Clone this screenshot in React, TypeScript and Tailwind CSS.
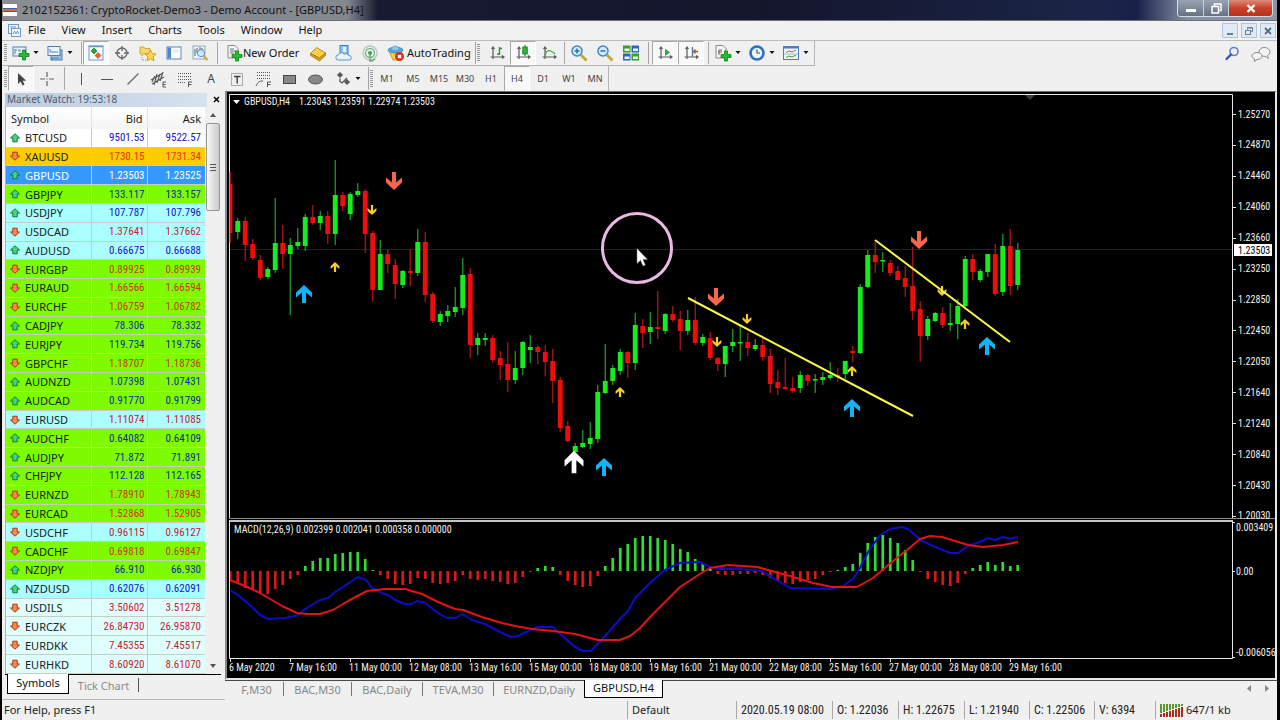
import type { ReactNode } from "react";

const UI = "font-['Noto_Sans','Open_Sans',sans-serif]";
const NUM = "font-['Roboto_Condensed','Roboto','Noto_Sans',sans-serif]";

/* ---------- market watch data ---------- */

const TONES = {
  white: "bg-white",
  gold: "bg-[#ffcc00]",
  selected: "bg-[#3399ff]",
  green: "bg-[#7ffb00]",
  cyan: "bg-[#abffff]",
  pale: "bg-[#dfffff]",
};
type Tone = keyof typeof TONES;
type Quote = [symbol: string, bid: string, ask: string, up: boolean, tone: Tone];

const QUOTES: Quote[] = [
  ["BTCUSD", "9501.53", "9522.57", true, "white"],
  ["XAUUSD", "1730.15", "1731.34", false, "gold"],
  ["GBPUSD", "1.23503", "1.23525", true, "selected"],
  ["GBPJPY", "133.117", "133.157", true, "green"],
  ["USDJPY", "107.787", "107.796", true, "cyan"],
  ["USDCAD", "1.37641", "1.37662", false, "cyan"],
  ["AUDUSD", "0.66675", "0.66688", true, "cyan"],
  ["EURGBP", "0.89925", "0.89939", false, "green"],
  ["EURAUD", "1.66566", "1.66594", false, "green"],
  ["EURCHF", "1.06759", "1.06782", false, "green"],
  ["CADJPY", "78.306", "78.332", true, "green"],
  ["EURJPY", "119.734", "119.756", true, "green"],
  ["GBPCHF", "1.18707", "1.18736", false, "green"],
  ["AUDNZD", "1.07398", "1.07431", true, "green"],
  ["AUDCAD", "0.91770", "0.91799", true, "green"],
  ["EURUSD", "1.11074", "1.11085", false, "cyan"],
  ["AUDCHF", "0.64082", "0.64109", true, "green"],
  ["AUDJPY", "71.872", "71.891", true, "green"],
  ["CHFJPY", "112.128", "112.165", true, "green"],
  ["EURNZD", "1.78910", "1.78943", false, "green"],
  ["EURCAD", "1.52868", "1.52905", false, "green"],
  ["USDCHF", "0.96115", "0.96127", false, "cyan"],
  ["CADCHF", "0.69818", "0.69847", false, "green"],
  ["NZDJPY", "66.910", "66.930", true, "green"],
  ["NZDUSD", "0.62076", "0.62091", true, "cyan"],
  ["USDILS", "3.50602", "3.51278", false, "pale"],
  ["EURCZK", "26.84730", "26.95870", false, "pale"],
  ["EURDKK", "7.45355", "7.45517", false, "pale"],
  ["EURHKD", "8.60920", "8.61070", false, "pale"],
];

/* ---------- chart data ---------- */

// high, body top, body bottom, low (chart units), direction
type Candle = [number, number, number, number, "u" | "d"];
const CANDLES: Candle[] = [
  [172, 184, 233, 243, "d"], [218, 221, 232, 239, "u"], [217, 221, 245, 261, "d"], [239, 244, 258, 260, "d"],
  [255, 260, 278, 280, "d"], [267, 269, 277, 279, "u"], [198, 243, 270, 273, "u"], [225, 243, 254, 269, "d"],
  [238, 245, 254, 315, "u"], [228, 242, 246, 249, "u"], [214, 217, 246, 251, "u"], [205, 217, 223, 225, "d"],
  [211, 216, 223, 230, "u"], [211, 216, 234, 244, "d"], [160, 195, 234, 245, "u"], [192, 195, 206, 211, "d"],
  [192, 194, 214, 220, "u"], [183, 191, 195, 197, "u"], [189, 191, 234, 253, "d"], [231, 233, 290, 302, "d"],
  [240, 254, 290, 290, "u"], [249, 254, 264, 273, "d"], [259, 265, 284, 299, "d"], [270, 271, 285, 288, "u"],
  [249, 271, 273, 286, "d"], [229, 242, 273, 276, "u"], [232, 242, 295, 302, "d"], [292, 294, 321, 323, "d"],
  [311, 314, 322, 326, "u"], [305, 311, 316, 322, "u"], [287, 307, 312, 317, "u"], [258, 275, 308, 315, "u"],
  [268, 274, 345, 358, "d"], [333, 338, 345, 355, "u"], [333, 338, 340, 346, "u"], [335, 338, 360, 363, "d"],
  [351, 358, 365, 380, "d"], [342, 364, 380, 392, "d"], [351, 368, 380, 384, "u"], [341, 342, 368, 375, "u"],
  [335, 347, 350, 363, "u"], [345, 347, 352, 364, "d"], [345, 352, 362, 376, "d"], [349, 361, 381, 403, "d"],
  [377, 380, 428, 432, "d"], [421, 426, 441, 442, "d"], [443, 446, 452, 452, "u"], [430, 443, 447, 448, "u"],
  [422, 438, 444, 449, "u"], [385, 392, 439, 443, "u"], [344, 381, 393, 394, "u"], [365, 368, 381, 385, "u"],
  [349, 352, 371, 375, "u"], [351, 352, 363, 378, "d"], [313, 325, 363, 370, "u"], [319, 326, 333, 348, "d"],
  [312, 327, 332, 344, "u"], [291, 327, 329, 339, "d"], [313, 314, 331, 334, "u"], [306, 314, 320, 322, "d"],
  [311, 319, 331, 350, "d"], [310, 320, 331, 335, "u"], [297, 320, 343, 345, "d"], [334, 337, 343, 346, "u"],
  [332, 338, 358, 360, "d"], [357, 358, 364, 371, "d"], [346, 346, 364, 377, "u"], [329, 342, 346, 352, "u"],
  [325, 342, 343, 361, "u"], [333, 342, 348, 356, "d"], [339, 345, 349, 351, "u"], [337, 345, 357, 361, "d"],
  [349, 356, 384, 393, "d"], [370, 382, 388, 395, "d"], [358, 387, 389, 390, "d"], [377, 388, 391, 393, "d"],
  [371, 375, 388, 393, "u"], [374, 375, 381, 386, "d"], [374, 379, 380, 393, "u"], [372, 377, 380, 385, "u"],
  [362, 375, 378, 380, "u"], [368, 375, 377, 382, "d"], [361, 361, 374, 379, "u"], [346, 351, 353, 362, "d"],
  [284, 287, 353, 354, "u"], [250, 255, 287, 288, "u"], [242, 255, 262, 273, "d"], [252, 260, 261, 272, "u"],
  [260, 263, 273, 276, "d"], [266, 271, 280, 280, "d"], [266, 278, 287, 297, "d"], [247, 286, 311, 320, "d"],
  [301, 309, 336, 362, "d"], [316, 319, 336, 340, "u"], [312, 313, 321, 322, "u"], [307, 313, 325, 328, "d"],
  [303, 323, 325, 331, "u"], [299, 306, 324, 339, "u"], [256, 259, 306, 307, "u"], [254, 259, 272, 280, "d"],
  [269, 271, 280, 282, "u"], [254, 254, 272, 277, "u"], [244, 254, 294, 296, "d"], [234, 246, 292, 296, "u"],
  [229, 246, 286, 295, "d"], [243, 250, 285, 290, "u"],
];

const HISTOGRAM = [
  -11, -13, -17, -18, -22, -23, -18, -14, -8, -4, 5, 10, 13, 13, 17, 18, 19, 19, 12, 1, -4, -8, -13, -14, -13, -7, -8,
  -12, -13, -12, -10, -4, -8, -9, -8, -10, -11, -13, -12, -6, -1, 3, 5, 4, -4, -10, -14, -16, -15, -5, 5, 13, 23, 27,
  33, 35, 35, 33, 31, 27, 22, 19, 12, 8, 2, -3, -4, -4, -3, -3, -2, -4, -7, -10, -12, -13, -11, -9, -8, -4, -1, 1, 4,
  7, 18, 28, 34, 36, 33, 28, 21, 11, -1, -8, -11, -14, -15, -12, -3, 3, 6, 9, 6, 9, 5, 6,
];

const MACD_LINE =
  "230,590 238,595 252,607 260,615 268,619 285,618 299,615 305,609 320,600 328,598 335,592 349,583 358,577 366,580 372,588 382,593 388,595 395,600 405,604 412,604 417,601 425,603 438,613 447,618 456,618 462,614 472,620 485,624 500,632 511,637 518,636 537,627 553,627 560,634 575,647 583,651 591,651 605,636 622,617 628,611 635,598 640,593 652,581 665,570 680,563 700,562 710,567 720,569 740,569 762,571 773,578 790,588 830,589 843,586 853,579 860,568 868,552 880,535 890,529 902,527 908,529 922,541 933,546 950,553 958,553 968,546 980,542 988,538 995,540 1003,537 1010,539 1018,537";
const SIGNAL_LINE =
  "230,580 245,586 260,593 282,606 297,613 308,614 320,614 333,610 348,601 367,591 385,589 405,589 422,594 438,602 455,609 463,610 482,617 502,623 515,626 532,629 553,631 575,634 598,640 620,640 630,636 640,628 653,614 680,587 703,572 710,568 728,565 757,567 790,576 813,583 832,587 857,587 873,578 893,561 907,550 920,539 930,536 942,537 968,545 983,547 1003,545 1018,542";

const PRICES = [
  "1.25270", "1.24870", "1.24460", "1.24060", "1.23660", "1.23250", "1.22850",
  "1.22450", "1.22050", "1.21640", "1.21240", "1.20840", "1.20430", "1.20030",
];
const DATES = [
  "6 May 2020", "7 May 16:00", "11 May 00:00", "12 May 08:00", "13 May 16:00", "15 May 00:00", "18 May 08:00",
  "19 May 16:00", "21 May 00:00", "22 May 08:00", "25 May 16:00", "27 May 00:00", "28 May 08:00", "29 May 16:00",
];

type Mark = [x: number, y: number, kind: "buy" | "sell" | "minorUp" | "minorDown" | "main"];
const MARKS: Mark[] = [
  [304, 294, "buy"], [604, 467, "buy"], [852, 408, "buy"], [987, 346, "buy"],
  [394, 181, "sell"], [716, 297, "sell"], [919, 240, "sell"],
  [335, 267, "minorUp"], [620, 392, "minorUp"], [852, 371, "minorUp"], [965, 324, "minorUp"],
  [372, 210, "minorDown"], [717, 342, "minorDown"], [747, 319, "minorDown"], [942, 291, "minorDown"],
  [574, 462, "main"],
];
const MARK_STYLE = {
  buy: { fill: "#12b4f8", sx: 1, sy: 1 },
  sell: { fill: "#f9664c", sx: 1, sy: -1 },
  minorUp: { fill: "#f5cf28", sx: 0.55, sy: 0.55 },
  minorDown: { fill: "#f5cf28", sx: 0.55, sy: -0.55 },
  main: { fill: "#ffffff", sx: 1.18, sy: 1.25 },
};

function Chart() {
  const cx = (i: number) => 230.2 + 7.5 * i;
  return (
    <svg
      viewBox="227 92 1048 586"
      preserveAspectRatio="xMinYMin meet"
      className={`block h-full w-full bg-black text-[10px] ${NUM}`}
      role="img"
      aria-label="GBPUSD H4 candlestick chart with MACD"
    >
      <path d="M229.5 518V94.5H1232.5V518.5" fill="none" stroke="#e8e8e8" />
      <path d="M229 518.5H1275" stroke="#8c8c8c" />
      <path d="M229 521H1233" stroke="#c4c4c4" strokeWidth="2" />
      <path d="M229.5 521V658.5H1232.5V521" fill="none" stroke="#e8e8e8" />
      <path d="M230 249.5H1232" stroke="#222524" />
      <path d="M1025 95h10l-5 5z" fill="#3c3c3c" />

      {CANDLES.map(([h, t, b, l, dir], i) => (
        <g key={i}>
          <rect x={cx(i) - 0.6} y={h} width="1.3" height={l - h} fill={dir === "u" ? "#1c9a24" : "#a81414"} />
          <rect
            x={i ? cx(i) - 2.4 : 230}
            y={t}
            width={i ? 4.9 : 2.4}
            height={Math.max(b - t, 1.5)}
            fill={dir === "u" ? "#14ee1c" : "#ee0c0c"}
          />
        </g>
      ))}

      {HISTOGRAM.map((v, i) => (
        <rect
          key={i}
          x={i ? cx(i) - 1.3 : 230}
          y={v > 0 ? 571 - v : 571}
          width={i ? 2.7 : 1.6}
          height={Math.abs(v)}
          fill={v > 0 ? "#2fdc35" : "#d81818"}
        />
      ))}
      <polyline points={MACD_LINE} fill="none" stroke="#0c0cc8" strokeWidth="2" strokeLinejoin="round" />
      <polyline points={SIGNAL_LINE} fill="none" stroke="#e01414" strokeWidth="2" strokeLinejoin="round" />

      {MARKS.map(([x, y, kind], i) => {
        const m = MARK_STYLE[kind];
        return (
          <path
            key={i}
            transform={`translate(${x} ${y}) scale(${m.sx} ${m.sy})`}
            d="M0-9L8-1.500V3.500L2-1.500V9H-2V-1.500L-8 3.500V-1.500Z"
            fill={m.fill}
          />
        );
      })}
      <path d="M688 298L913 416M875 240L1010 342" stroke="#fbf64a" strokeWidth="2" fill="none" />

      <circle cx="637" cy="248" r="34.500" fill="none" stroke="#ebb8e6" strokeWidth="3" />
      <path d="M637 248.500v15l3.500-3.200 2.500 5.700 2.400-1-2.500-5.600h4.600z" fill="#fff" stroke="#777" strokeWidth="0.500" />

      <path d="M233 100h7l-3.500 4z" fill="#fff" />
      <g fill="#f0f0f0">
        <text x="244" y="105">GBPUSD,H4</text>
        <text x="299" y="105">1.23043 1.23591 1.22974 1.23503</text>
        <text x="234" y="533">MACD(12,26,9) 0.002399 0.002041 0.000358 0.000000</text>
        {PRICES.map((p, i) => (
          <text key={p} x="1238" y={Math.round(117.5 + 30.92 * i)}>{p}</text>
        ))}
        <text x="1236" y="531">0.003409</text>
        <text x="1236" y="575">0.00</text>
        <text x="1236" y="656">-0.006056</text>
        {DATES.map((d, i) => (
          <text key={d} x={229 + 60 * i} y="671">{d}</text>
        ))}
      </g>
      {PRICES.map((p, i) => (
        <path key={p} d={`M1233 ${Math.round(114 + 30.92 * i) + 0.5}h3`} stroke="#ddd" />
      ))}
      {DATES.map((d, i) => (
        <path key={d} d={`M${230.5 + 60 * i} 659v3`} stroke="#ddd" />
      ))}
      <path d="M1233 571.500h2M1233 657.500h2M1233 522.500h2" stroke="#ddd" />
      <rect x="1234" y="244" width="38" height="12" fill="#fff" />
      <text x="1238" y="254" fill="#000">1.23503</text>
    </svg>
  );
}

/* ---------- icons ---------- */

function Icon({ children }: { children: ReactNode }) {
  return (
    <svg width="18" height="18" viewBox="0 0 18 18" fill="none" className="shrink-0" aria-hidden="true">
      {children}
    </svg>
  );
}
const Plus = ({ x, y }: { x: number; y: number }) => (
  <path transform={`translate(${x} ${y})`} d="M-1.500-5h3v3.500h3.500v3h-3.500v3.500h-3v-3.500h-3.500v-3h3.500z" fill="#22c02c" stroke="#0d7d18" strokeWidth="0.800" />
);
const Caret = () => (
  <svg width="6" height="4" viewBox="0 0 6 4" className="shrink-0" aria-hidden="true">
    <path d="M0.500 0h5L3 3z" fill="#111" />
  </svg>
);
const axes = <path d="M5 3v12M2.500 13H16M3.500 5L5 3l1.500 2M14 11.500L16 13l-2 1.500" stroke="#5a5a5a" strokeWidth="1.200" />;

const ICONS = {
  newChart: <Icon><rect x="1" y="3" width="13" height="9" fill="#e8f2fb" stroke="#4a80b4" /><path d="M3 5v5M3 6h2M7 5v2h2" stroke="#4a80b4" /><Plus x={12} y={11} /></Icon>,
  profiles: <Icon><rect x="5" y="6" width="11" height="10" fill="#9cc0e4" stroke="#4a7cae" /><rect x="2" y="2.500" width="12" height="9" fill="#eef6fd" stroke="#4a80b4" /><path d="M4 8h8M4 5v3M6 16v-2h7" stroke="#4a80b4" /></Icon>,
  marketWatch: <Icon><rect x="2" y="2" width="14" height="14" fill="#fff" stroke="#5a9bd8" /><path d="M2 2.500h14" stroke="#5a9bd8" strokeWidth="1.500" /><path d="M7 4l3 3-3 3-3-3z" fill="#28a428" stroke="#1a7c1a" strokeWidth="0.600" /><path d="M11 8.500l3 3-3 3-3-3z" fill="#f0603a" stroke="#b83a18" strokeWidth="0.600" /></Icon>,
  dataWindow: <Icon><circle cx="9" cy="9" r="5" stroke="#666" strokeWidth="1.300" /><path d="M9 2v5M9 11v5M2 9h5M11 9h5" stroke="#666" strokeWidth="1.300" /></Icon>,
  navigator: <Icon><path d="M1 3h4l1 1.500h5V10H1z" fill="#f9d867" stroke="#c29a2a" strokeWidth="0.800" /><path d="M3 11v5h4" stroke="#888" strokeDasharray="1 1" /><path d="M11.500 6l1.700 3.600 3.900.5-2.900 2.700.8 3.900-3.500-1.900L8 16.700l.8-3.900L5.900 10.100l3.900-.5z" fill="#ffd83c" stroke="#bb9116" strokeWidth="0.800" /></Icon>,
  terminal: <Icon><rect x="2" y="3" width="14" height="12" fill="#fff" stroke="#4f86bd" /><rect x="2.500" y="3.500" width="3.500" height="11" fill="#4a88c8" /><path d="M8 6h6M8 8h6" stroke="#cfdcea" /></Icon>,
  tester: <Icon><rect x="2" y="2" width="12" height="13" fill="#eaf2fa" stroke="#8ea8c4" /><path d="M4 5v7M6 4v5M9 3v5M11 4v5" stroke="#567" /><circle cx="10" cy="9" r="3.600" fill="#d2e8fa" fillOpacity="0.800" stroke="#5b8fc2" /><path d="M12.500 12l4 4" stroke="#d9a520" strokeWidth="2" /></Icon>,
  order: <Icon><path d="M3 1.500h7l3 3V14H3z" fill="#f4f4f4" stroke="#888" /><path d="M5 5h4M5 7h6M5 9h4" stroke="#777" /><Plus x={12} y={12} /></Icon>,
  metaEditor: <Icon><path d="M1.500 9.500L7.500 3.500 16.500 9l-6 5z" fill="#fbd04a" stroke="#a87a12" strokeWidth="0.800" /><path d="M1.500 9.500v2L10.500 17l6-5.500V9l-6 5z" fill="#d99b1c" stroke="#a87a12" strokeWidth="0.800" /></Icon>,
  cloud: <Icon><rect x="5" y="1.500" width="8" height="9" fill="#8cc4f4" stroke="#3f7fc0" /><rect x="8" y="3" width="3" height="5" fill="#e6f4fe" /><path d="M3.500 16a2.500 2.500 0 01-.3-5 3.500 3.500 0 016-1 3.200 3.200 0 014.300 1.500A2.300 2.300 0 0114.500 16z" fill="#e8f3fc" stroke="#5f8fbe" /></Icon>,
  signals: <Icon><circle cx="9" cy="9" r="7" stroke="#b5c9b9" strokeWidth="1.300" /><circle cx="9" cy="9" r="4.500" stroke="#7fb38a" strokeWidth="1.400" /><circle cx="9" cy="9" r="2" fill="#28a838" /><path d="M9 9v8h2l3-2" stroke="#6aa876" strokeWidth="1.500" /></Icon>,
  auto: <Icon><path d="M2 7l6 2 7-2-3 9H6z" fill="#f4cc40" stroke="#b98f1b" strokeWidth="0.800" /><ellipse cx="8.500" cy="6" rx="7.500" ry="2.800" fill="#5aa6e0" stroke="#3b82be" strokeWidth="0.800" /><path d="M4.500 5.500C4.500 0.800 12 0.800 12 5.500 10 7 6.500 7 4.500 5.500z" fill="#8dc8f3" stroke="#4a90ca" strokeWidth="0.600" /><circle cx="12.500" cy="12.500" r="4.500" fill="#d8301e" /><rect x="10.800" y="10.800" width="3.400" height="3.400" fill="#fff" /></Icon>,
  bars: <Icon>{axes}<path d="M11.500 3v8M11.500 4.500h2.500M9 10h2.500" stroke="#2f9a35" strokeWidth="1.500" /></Icon>,
  candles: <Icon>{axes}<path d="M11 1v11" stroke="#187a1e" /><rect x="8.800" y="3" width="4.500" height="7" fill="#28b82e" stroke="#187a1e" strokeWidth="0.800" /></Icon>,
  line: <Icon>{axes}<path d="M5 12C6 6 9 4.500 15 10" stroke="#4aa850" strokeWidth="1.300" /></Icon>,
  zoomIn: <Icon><path d="M11 11l5.500 5.500" stroke="#c9a227" strokeWidth="2.600" /><circle cx="7" cy="7" r="5" fill="#d5ebfb" stroke="#3c86c8" strokeWidth="1.500" /><path d="M4.500 7h5M7 4.500v5" stroke="#2a70b4" strokeWidth="1.500" /></Icon>,
  zoomOut: <Icon><path d="M11 11l5.500 5.500" stroke="#c9a227" strokeWidth="2.600" /><circle cx="7" cy="7" r="5" fill="#d5ebfb" stroke="#3c86c8" strokeWidth="1.500" /><path d="M4.500 7h5" stroke="#2a70b4" strokeWidth="1.500" /></Icon>,
  tile: <Icon><rect x="1" y="1.500" width="7.500" height="7" fill="#3f9a2f" /><rect x="9.500" y="1.500" width="7.500" height="7" fill="#2d67b8" /><rect x="1" y="9.500" width="7.500" height="7" fill="#2d67b8" /><rect x="9.500" y="9.500" width="7.500" height="7" fill="#3f9a2f" /><path d="M2.500 4.500h5v2.500h-5zM11 4.500h5v2.500h-5zM2.500 12.500h5v2.500h-5zM11 12.500h5v2.500h-5z" fill="#f2f7f2" /></Icon>,
  scroll: <Icon>{axes}<path d="M9 4.500l5 4L9 12z" fill="#2ca834" /></Icon>,
  shift: <Icon>{axes}<path d="M10.500 3v10" stroke="#3f74a8" strokeWidth="1.300" /><path d="M16 7.500h-4M13.500 5.500l-2 2 2 2" stroke="#c8501e" strokeWidth="1.400" /></Icon>,
  indicators: <Icon><path d="M2 1.500h7l3 3V14H2z" fill="#f4f4f4" stroke="#888" /><path d="M5 11V6h3M4 8h4" stroke="#666" /><Plus x={12} y={12} /></Icon>,
  clock: <Icon><circle cx="9" cy="9" r="6.500" fill="#e9f4fd" stroke="#2c72bc" strokeWidth="2.600" /><path d="M9 5.500V9h3" stroke="#456" strokeWidth="1.200" /></Icon>,
  template: <Icon><rect x="1.500" y="2.500" width="15" height="13" fill="#eef6fd" stroke="#4a80b4" /><path d="M1.500 3.500h15" stroke="#4a80b4" strokeWidth="2" /><path d="M4 8.500L7 7l3 1 4-2" stroke="#b06a3a" /><path d="M4 13.500L7 12l3 1 4-2" stroke="#3a9a42" /><path d="M2 10h14" stroke="#9cbede" /></Icon>,
  pointer: <Icon><path d="M6 3v11l2.700-2.500L10.500 15.500l2-1-1.800-3.700h3.500z" fill="#444" /></Icon>,
  cross: <Icon><path d="M9 2v5M9 11v5M2 9h5M11 9h5M9 8.500v1" stroke="#666" strokeWidth="1.200" /></Icon>,
  vline: <Icon><path d="M9.500 3v12" stroke="#555" /></Icon>,
  hline: <Icon><path d="M3 9.500h12" stroke="#555" /></Icon>,
  trend: <Icon><path d="M3.500 14.500l11-11" stroke="#666" strokeWidth="1.200" /></Icon>,
  channel: <Icon><path d="M1 10L13 3M2 14L14 7M4 15L7 4M7 13l3-9M10 11l3-9M2 12L5 6" stroke="#555" strokeWidth="1.100" /><path d="M16 12h-3v5h3M13 14.500h2.500" stroke="#555" /></Icon>,
  fibo: <Icon><path d="M2 3.500h13M2 6.500h13M2 9.500h13M2 12.500h8" stroke="#555" strokeDasharray="1 1" /><path d="M12.500 17v-5H16M12.500 14.500h3" stroke="#555" /></Icon>,
  textBox: <Icon><rect x="3.500" y="3.500" width="11" height="12" stroke="#666" strokeDasharray="1 1" /><path d="M6 6.500h6.500M9.200 6.500v7" stroke="#444" strokeWidth="1.500" /></Icon>,
  arc: <Icon><path d="M3 2.500h13M3 5.500h13M3 8.500h13" stroke="#555" strokeDasharray="1 1" /><path d="M2 16c2-4 3-5 7-5M13.500 17v-5H17M13.500 14.500h3" stroke="#555" /></Icon>,
  rect: <Icon><rect x="3.500" y="5.500" width="12" height="8" fill="#888" stroke="#444" /></Icon>,
  ellipse: <Icon><ellipse cx="9.500" cy="9.500" rx="7" ry="4.500" fill="#888" stroke="#555" /></Icon>,
  arrows: <Icon><path d="M6 2.500L8.500 5 6 7.500 3.500 5z" fill="#555" stroke="#555" /><path d="M6 8.500v3l2 1.500 5-5" stroke="#555" strokeWidth="1.300" /><path d="M13 9.500l2.500 2.500-2.500 2.500-2.500-2.500z" fill="#555" stroke="#555" /></Icon>,
  search: <Icon><circle cx="11" cy="6.500" r="4" stroke="#5f7fd4" strokeWidth="1.600" /><path d="M8 9.500L3.500 14" stroke="#2f55c4" strokeWidth="2.400" strokeLinecap="round" /></Icon>,
};
type IconName = keyof typeof ICONS;

const ChatIcon = () => (
  <svg width="20" height="16" viewBox="0 0 20 16" fill="#f4f4f4" stroke="#8c8c8c" aria-hidden="true">
    <path d="M13 1.500c3.500 0 6 1.800 6 4.300 0 1.700-1 3-2.500 3.700l.8 3-3.300-2.300C10 10.500 8 8.500 8 6s2-4.500 5-4.500z" />
    <path d="M6 6.500c3 0 5 1.500 5 3.500s-2 3.500-5 3.500L3.500 15.500v-2.700C2 12.200 1 11.200 1 10c0-2 2-3.500 5-3.500z" />
  </svg>
);

const PRESSED = "border border-[#a8a8a8] border-r-white border-b-white bg-[#f8f8f8]";

function Tool({ icon, label, pressed }: { icon: IconName; label: string; pressed?: boolean }) {
  return (
    <button
      type="button"
      aria-label={label}
      title={label}
      className={`flex h-full w-[26px] shrink-0 items-center justify-center ${pressed ? PRESSED : ""}`}
    >
      {ICONS[icon]}
    </button>
  );
}
function DropTool({ icon, label }: { icon: IconName; label: string }) {
  return (
    <button type="button" aria-label={label} title={label} className="flex h-full w-[34px] shrink-0 items-center gap-[3px] pl-0.5">
      {ICONS[icon]}
      <Caret />
    </button>
  );
}
const Rule = ({ wide }: { wide?: boolean }) => (
  <span className={`flex h-full shrink-0 justify-center py-px ${wide ? "w-2" : "w-1"}`}>
    <span className="w-px bg-[#a5a5a5]" />
  </span>
);
const Grip = () => (
  <span className="h-[18px] w-[3px] shrink-0 bg-[repeating-linear-gradient(to_bottom,#9a9a9a_0_1px,#f0f0f0_1px_2px)]" />
);

function QuoteArrow({ up }: { up: boolean }) {
  return (
    <svg width="10" height="10" viewBox="0 0 10 10" className={`shrink-0 ${up ? "" : "rotate-180"}`} aria-hidden="true">
      <path
        d="M5 .800L9.500 5H7.200V8.800H2.800V5H.5z"
        fill={up ? "#4fd080" : "#ff8a50"}
        stroke={up ? "#0b7a3c" : "#b03010"}
      />
    </svg>
  );
}

function quoteColor(up: boolean, tone: Tone) {
  if (tone === "selected") return "text-white";
  if (tone === "green") return up ? "text-[#0c2f9c]" : "text-[#c03c08]";
  if (tone === "gold") return "text-[#e03808]";
  return up ? "text-[#1414c4]" : "text-[#c8202c]";
}

function MarketWatch() {
  return (
    <aside className="flex w-[223px] shrink-0 flex-col border-b border-[#b8b8b8] pl-[3px]">
      <header className="flex h-4 items-center pt-px text-[10px] text-[#4b5a6e]">
        <h2 className="flex h-3.5 flex-1 items-center bg-linear-to-r from-[#bccbdc] to-[#d6e2f0] pl-0.5">
          Market Watch: 19:53:18
        </h2>
        <button type="button" aria-label="Close Market Watch" className="flex h-3.5 w-[18px] items-center justify-center">
          <svg width="7" height="7" viewBox="0 0 7 7" aria-hidden="true">
            <path d="M1 1l5 5M6 1L1 6" stroke="#000" strokeWidth="1.500" />
          </svg>
        </button>
      </header>
      <div className="mr-1 flex min-h-0 flex-1 border-l border-[#b4b4b4]">
        <div className="min-h-0 flex-1">
          <table className="h-full w-full table-fixed border-collapse leading-none">
            <colgroup>
              <col />
              <col className="w-14" />
              <col className="w-[58px]" />
            </colgroup>
            <thead>
              <tr className="h-[22px] bg-linear-to-b from-white to-[#f4f4f4] text-[#222]">
                <th className="p-0 pl-[5px] text-left font-normal">Symbol</th>
                <th className="border-l border-[#e2e2e2] p-0 pr-1 text-right font-normal">Bid</th>
                <th className="border-l border-[#e2e2e2] p-0 pr-1 text-right font-normal">Ask</th>
              </tr>
            </thead>
            <tbody>
              {QUOTES.map(([symbol, bid, ask, up, tone]) => (
                <tr key={symbol} className={`border-b border-[#c4cfc0] ${TONES[tone]}`}>
                  <td className={`p-0 pl-1 ${tone === "selected" ? "text-white" : "text-[#16241c]"}`}>
                    <span className="flex items-center gap-[5px]">
                      <QuoteArrow up={up} />
                      {symbol}
                    </span>
                  </td>
                  <td className={`border-l border-[#c4cfc0] p-0 pr-0.5 text-right ${NUM} ${quoteColor(up, tone)}`}>{bid}</td>
                  <td className={`border-l border-[#c4cfc0] p-0 pr-1 text-right ${NUM} ${quoteColor(up, tone)}`}>{ask}</td>
                </tr>
              ))}
            </tbody>
          </table>
        </div>
        <div className="flex w-4 flex-col items-center bg-[#f0f0f0] py-1.5" aria-hidden="true">
          <svg width="6" height="4" viewBox="0 0 6 4"><path d="M0 4h6L3 0z" fill="#555" /></svg>
          <div className="mt-1.5 flex h-[88px] w-3.5 flex-col items-center justify-center gap-0.5 rounded-xs border border-[#979797] bg-linear-to-r from-[#f8f8f8] to-[#cbcbcb]">
            <span className="h-px w-1.5 bg-[#555]" />
            <span className="h-px w-1.5 bg-[#555]" />
            <span className="h-px w-1.5 bg-[#555]" />
          </div>
          <svg width="6" height="4" viewBox="0 0 6 4" className="mt-auto"><path d="M0 0h6L3 4z" fill="#555" /></svg>
        </div>
      </div>
      <nav className="mr-1 flex h-[25px] border-t border-black">
        <button type="button" className="-mt-px ml-0.5 h-5 w-[62px] border border-t-0 border-black bg-white text-[#111]">
          Symbols
        </button>
        <button type="button" className="mt-[3px] h-3.5 w-[70px] border-r border-[#555] leading-none text-[#8a8a8a]">
          Tick Chart
        </button>
      </nav>
    </aside>
  );
}

const MENUS = ["File", "View", "Insert", "Charts", "Tools", "Window", "Help"];
const FRAMES: [string, boolean][] = [
  ["M1", false], ["M5", false], ["M15", false], ["M30", false], ["H1", false],
  ["H4", true], ["D1", false], ["W1", false], ["MN", false],
];
const TABS: [string, string][] = [
  ["F,M30", "w-[54px]"],
  ["BAC,M30", "w-[68px]"],
  ["BAC,Daily", "w-[71px]"],
  ["TEVA,M30", "w-[71px]"],
  ["EURNZD,Daily", "w-[90px]"],
];
const STATUS: [string, string][] = [
  ["Default", "w-[109px]"],
  ["2020.05.19 08:00", "w-24"],
  ["O: 1.22036", "w-[66px]"],
  ["H: 1.22675", "w-[66px]"],
  ["L: 1.21940", "w-[65px]"],
  ["C: 1.22506", "w-[65px]"],
  ["V: 6394", "w-[61px]"],
];

function TitleBar() {
  return (
    <header className="flex h-[21px] shrink-0 items-center border-b border-[#6d7078] bg-[linear-gradient(to_right,#8b8d94_0,#85878f_345px,#171a30_376px,#14162c_60%,#1a2548_86%,#18204a_89%,#8391a4_93%,#8794a6_100%)] pr-1">
      <span className="ml-px flex h-3 w-3.5 items-center bg-white text-[5px] leading-none text-[#b03020]" aria-hidden="true">
        <span className="h-1 w-full border-y border-[#4a5aa8] bg-[#d86a4a]" />
      </span>
      <h1 className="ml-[5px] text-[#111]">2102152361: CryptoRocket-Demo3 - Demo Account - [GBPUSD,H4]</h1>
      <div className="mb-auto ml-auto flex h-[17px] overflow-hidden rounded-b border border-t-0 border-[#d5dbe4]">
        <button type="button" aria-label="Minimize" className="flex w-[26px] items-end justify-center border-r border-[#c9d0da] bg-linear-to-b from-[#9aa4b2] to-[#667284] pb-1">
          <span className="h-[3px] w-2.5 bg-white" />
        </button>
        <button type="button" aria-label="Restore" className="flex w-[25px] items-center justify-center border-r border-[#c9d0da] bg-linear-to-b from-[#9aa4b2] to-[#667284]">
          <svg width="11" height="11" viewBox="0 0 11 11" fill="none" stroke="#fff" strokeWidth="1.500" aria-hidden="true">
            <path d="M3.500 3V1h6.500v6.500H8.500" /><rect x="1" y="3.500" width="6.500" height="6.500" />
          </svg>
        </button>
        <button type="button" aria-label="Close" className="flex w-[43px] items-center justify-center bg-linear-to-b from-[#dd8a78] via-[#c8402a] to-[#b8321c]">
          <svg width="10" height="9" viewBox="0 0 10 9" aria-hidden="true"><path d="M1.500 1l7 7M8.500 1l-7 7" stroke="#fff" strokeWidth="2.400" /></svg>
        </button>
      </div>
    </header>
  );
}

function MenuBar() {
  const mdi = "flex h-[15px] w-4 items-center justify-center border border-[#b3c4d8] bg-[#dfeaf7]";
  return (
    <nav className="flex h-5 shrink-0 items-center border-b border-[#bdbdbd] bg-[#f1f1f1] pl-1.5 text-[#111]">
      <svg width="13" height="13" viewBox="0 0 13 13" fill="none" aria-hidden="true">
        <rect x=".5" y=".5" width="10" height="9" fill="#e6f1fb" stroke="#6b9cc8" />
        <rect x="3.500" y="4.500" width="9" height="8" fill="#f4faff" stroke="#6b9cc8" />
        <path d="M5 10l1.500-3 1.500 3 1.500-3 1.500 3M2 3h6" stroke="#6b9cc8" />
      </svg>
      <div className="ml-[7px] flex gap-4">
        {MENUS.map((m) => (
          <button key={m} type="button">{m}</button>
        ))}
      </div>
      <div className="ml-auto flex gap-[3px] pr-px">
        <button type="button" aria-label="Minimize chart" className={mdi}><span className="mt-1.5 h-0.5 w-1.5 bg-[#6c7d92]" /></button>
        <button type="button" aria-label="Restore chart" className={mdi}>
          <svg width="8" height="8" viewBox="0 0 8 8" fill="none" stroke="#6c7d92" aria-hidden="true"><path d="M2.500 2.500v-2h5v4h-2M2.500 1h5" /><rect x=".5" y="3.500" width="5" height="4" /></svg>
        </button>
        <button type="button" aria-label="Close chart" className={mdi}>
          <svg width="8" height="8" viewBox="0 0 8 8" aria-hidden="true"><path d="M1 1l6 6M7 1L1 7" stroke="#5d6d82" strokeWidth="1.800" /></svg>
        </button>
      </div>
    </nav>
  );
}

function Toolbars() {
  return (
    <div className="shrink-0 bg-[#f0f0f0]">
      <div className="flex h-[25px] items-center">
        <div className="flex h-full items-center border-r border-b border-[#b4b4b4] pl-0.5">
          <Grip />
          <span className="flex h-full w-[72px] pl-[3px]">
            <DropTool icon="newChart" label="New chart" />
            <DropTool icon="profiles" label="Profiles" />
          </span>
          <Rule />
          <Tool icon="marketWatch" label="Market Watch" pressed />
          <Tool icon="dataWindow" label="Data Window" />
          <Tool icon="navigator" label="Navigator" />
          <Tool icon="terminal" label="Terminal" />
          <Tool icon="tester" label="Strategy Tester" />
          <Rule wide />
          <button type="button" className="flex h-full w-[84px] items-center pl-1 whitespace-nowrap text-[#111]">
            {ICONS.order}New Order
          </button>
          <Tool icon="metaEditor" label="MetaEditor" />
          <Tool icon="cloud" label="Virtual Hosting" />
          <Tool icon="signals" label="Signals" />
          <button type="button" className="flex h-full w-[90px] items-center gap-0.5 pl-1 whitespace-nowrap text-[#111]">
            {ICONS.auto}AutoTrading
          </button>
          <Rule />
          <Grip />
          <span className="w-1" />
          <Tool icon="bars" label="Bar Chart" />
          <Tool icon="candles" label="Candlesticks" pressed />
          <Tool icon="line" label="Line Chart" />
          <Rule />
          <Tool icon="zoomIn" label="Zoom In" />
          <Tool icon="zoomOut" label="Zoom Out" />
          <Tool icon="tile" label="Tile Windows" />
          <Rule wide />
          <Tool icon="scroll" label="Auto Scroll" pressed />
          <Tool icon="shift" label="Chart Shift" pressed />
          <Rule wide />
          <DropTool icon="indicators" label="Indicators" />
          <DropTool icon="clock" label="Periods" />
          <DropTool icon="template" label="Templates" />
        </div>
        <div className="ml-auto flex items-center gap-2.5 pr-1.5">
          <button type="button" aria-label="Search">{ICONS.search}</button>
          <button type="button" aria-label="Chat"><ChatIcon /></button>
        </div>
      </div>
      <div className="flex h-[25px] items-center">
        <div className="flex h-full items-center border-r border-[#b4b4b4] pl-0.5">
          <Grip />
          <span className="w-px" />
          <Tool icon="pointer" label="Cursor" pressed />
          <Tool icon="cross" label="Crosshair" />
          <Rule wide />
          <Tool icon="vline" label="Vertical Line" />
          <Tool icon="hline" label="Horizontal Line" />
          <Tool icon="trend" label="Trendline" />
          <Tool icon="channel" label="Equidistant Channel" />
          <Tool icon="fibo" label="Fibonacci Retracement" />
          <button type="button" aria-label="Text" className="h-full w-[26px] text-xs text-[#444]">A</button>
          <Tool icon="textBox" label="Text Label" />
          <Tool icon="arc" label="Fibonacci Arcs" />
          <Tool icon="rect" label="Rectangle" />
          <Tool icon="ellipse" label="Ellipse" />
          <span className="w-1" />
          <DropTool icon="arrows" label="Arrows" />
          <Rule />
          <Grip />
          <span className="w-px" />
          {FRAMES.map(([f, on]) => (
            <button key={f} type="button" className={`h-full w-[26px] text-[9px] text-[#444] ${on ? PRESSED : ""}`}>
              {f}
            </button>
          ))}
        </div>
      </div>
    </div>
  );
}

export default function App() {
  return (
    <div className="h-screen w-full bg-black pr-[3px] pl-0.5">
      <div className={`flex h-full flex-col overflow-hidden bg-[#f0f0f0] text-[11px] ${UI}`}>
        <TitleBar />
        <MenuBar />
        <Toolbars />
        <main className="flex min-h-0 flex-1">
          <MarketWatch />
          <section className="flex min-w-0 flex-1 flex-col">
            <div className="min-h-0 flex-1 border-t border-r-2 border-b-2 border-l-2 border-t-[#6e6e6e] border-r-[#e8e8e8] border-b-[#e8e8e8] border-l-[#8a8a8a]">
              <Chart />
            </div>
            <nav className="flex h-5 shrink-0 items-start border-t border-[#4a4a4a] pl-[5px] text-[#888]">
              {TABS.map(([name, width], i) => (
                <button
                  key={name}
                  type="button"
                  className={`mt-px h-3.5 shrink-0 leading-none whitespace-nowrap ${width} ${i < TABS.length - 1 ? "border-r border-[#777]" : ""}`}
                >
                  {name}
                </button>
              ))}
              <button type="button" className="-mt-px flex h-[18px] w-[79px] items-center justify-center border border-t-0 border-black bg-white text-[#111]">
                GBPUSD,H4
              </button>
              <span className="mt-1 mr-1 ml-auto flex gap-2.5">
                <button type="button" aria-label="Scroll tabs left" className="w-2">
                  <svg width="5" height="7" viewBox="0 0 5 7" aria-hidden="true"><path d="M4 0v7L0 3.500z" fill="#888" /></svg>
                </button>
                <button type="button" aria-label="Scroll tabs right" className="w-2">
                  <svg width="5" height="7" viewBox="0 0 5 7" aria-hidden="true"><path d="M0 0v7l4-3.500z" fill="#888" /></svg>
                </button>
              </span>
            </nav>
          </section>
        </main>
        <footer className="flex h-5 shrink-0 items-center text-[#222]">
          <span className="flex-1 pl-0.5">For Help, press F1</span>
          {STATUS.map(([text, width], i) => (
            <span
              key={text}
              className={`flex h-[18px] shrink-0 items-center border-l border-[#a8a8a8] pl-1 whitespace-nowrap ${width} ${i ? `text-xs ${NUM}` : ""}`}
            >
              {text}
            </span>
          ))}
          <span className="flex h-[18px] w-[122px] shrink-0 items-center gap-[3px] border-l border-[#a8a8a8] pl-1">
            <svg width="23" height="13" viewBox="0 0 23 13" aria-hidden="true">
              {[0, 1, 2, 3, 4, 5, 6, 7].map((i) => (
                <g key={i}>
                  <rect x={i * 3} y="0" width="2" height={9 - i} fill="#5c9a2e" />
                  <rect x={i * 3} y={10 - i} width="2" height={3 + i} fill="#b02a1c" />
                </g>
              ))}
            </svg>
            647/1 kb
          </span>
        </footer>
      </div>
    </div>
  );
}
